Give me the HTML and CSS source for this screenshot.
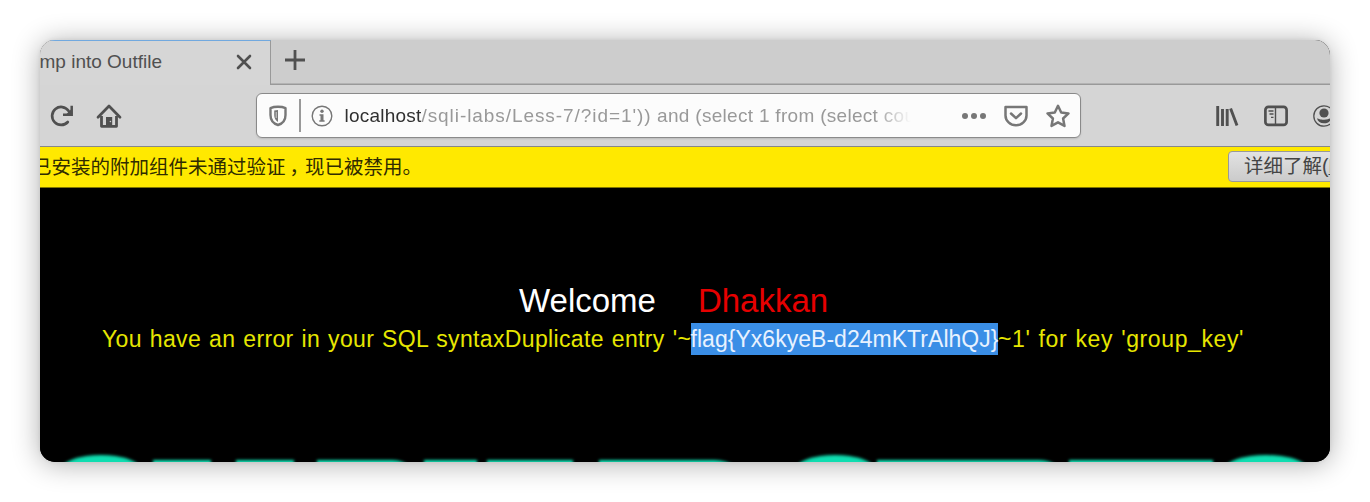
FILE: index.html
```html
<!DOCTYPE html>
<html lang="zh-CN">
<head>
<meta charset="utf-8">
<title>Dump into Outfile</title>
<link rel="stylesheet" href="styles.css">
</head>
<body>
<main class="window">
  <header class="tabs">
    <div class="tab">
      <span class="tab-title">mp into Outfile</span>
      <svg class="close" width="16" height="16" viewBox="0 0 16 16"><path d="M2 2l12 12M14 2L2 14"/></svg>
    </div>
    <svg class="plus" width="22" height="22" viewBox="0 0 22 22"><path d="M11 1v20M1 11h20"/></svg>
  </header>
  <nav class="toolbar">
    <svg class="icon reload" width="24" height="24" viewBox="0 0 24 24"><path d="M17.800 18A9 9 0 1 1 18.500 6.800L21 9.500" fill="none" stroke="#505050" stroke-width="2.700" stroke-linecap="round"/><path d="M21.700 1.800V10.700H13" fill="none" stroke="#505050" stroke-width="2.500"/><path d="M21.500 5v6h-6z" fill="#505050"/></svg>
    <svg class="icon home" width="26" height="26" viewBox="0 0 26 26"><path d="M2 14.200L13 3l11 11.200" fill="none" stroke="#505050" stroke-width="2.700" stroke-linecap="round" stroke-linejoin="round"/><path d="M5.500 13v10.300h15V13" fill="none" stroke="#505050" stroke-width="2.800" stroke-linejoin="round"/><path d="M10 14h6.200v9H10z" fill="#505050"/><circle cx="14.400" cy="18.500" r=".8" fill="#ccc"/></svg>
    <div class="urlbar">
      <svg class="shield" width="20" height="22" viewBox="0 0 20 22"><path d="M10 1.800c3 0 5.500.4 7.500 1.300V10c0 5-3.200 8.700-7.500 10C5.700 18.700 2.500 15 2.500 10V3.100C4.500 2.200 7 1.800 10 1.800z" fill="none" stroke="#777" stroke-width="2.400" stroke-linejoin="round"/><path d="M10 5v12c-2.300-1.300-3.800-3.800-3.800-7V5.500z" fill="#777"/><path d="M8.200 7v6" stroke="#ddd" stroke-width=".9"/></svg>
      <i class="divider"></i>
      <svg class="info" width="22" height="22" viewBox="0 0 22 22"><circle cx="11" cy="11" r="9.800" fill="none" stroke="#777" stroke-width="1.400"/><circle cx="11" cy="6.200" r="1.700" fill="#777"/><path d="M8.500 9.300h4v6h1.100v1.500H8.300v-1.500h1.200v-4.500h-1z" fill="#777"/></svg>
      <div class="url"><b>localhost</b><span class="path">/sqli-labs/Less-7/?id=1'))</span><span class="query"> and (select 1 from (select cou</span></div>
      <svg class="dots" width="26" height="8" viewBox="0 0 26 8"><circle cx="4" cy="4" r="3"/><circle cx="13" cy="4" r="3"/><circle cx="22" cy="4" r="3"/></svg>
      <svg class="pocket" width="26" height="24" viewBox="0 0 26 24"><path d="M2.500 3h21v8.500a10.500 9.700 0 0 1-21 0z"/><path d="M8 9.500l5 4.700 5-4.700" stroke-linecap="round"/></svg>
      <svg class="star" width="26" height="26" viewBox="0 0 26 26"><path d="M13 2.800l3.200 6.700 7.300.9-5.400 5.100 1.400 7.400-6.500-3.600-6.500 3.600 1.400-7.400-5.400-5.100 7.300-.9z"/></svg>
    </div>
    <svg class="icon library" width="24" height="24" viewBox="0 0 24 24"><path d="M2.700 2v20M7.500 5v17M12.200 5v17M15.600 4.500L22 21.600" fill="none" stroke="#505050" stroke-width="2.900"/></svg>
    <svg class="icon sidebar" width="26" height="24" viewBox="0 0 26 24"><rect x="2.400" y="2.900" width="21.200" height="18" rx="3" fill="none" stroke="#505050" stroke-width="2.700"/><path d="M12.500 3v18" stroke="#505050" stroke-width="1.400"/><path d="M5.500 7h5M6.500 10h4M8 13.300h2.500" stroke="#505050" stroke-width="1.300"/></svg>
    <svg class="icon account" width="24" height="24" viewBox="0 0 24 24"><circle cx="12" cy="12" r="10.200" fill="none" stroke="#505050" stroke-width="1.300"/><circle cx="12" cy="9" r="4.600" fill="#505050"/><path d="M5 14.500c2 0 3 1.300 7 1.300s5-1.300 7-1.300c-.8 3-3.300 4.800-7 4.800s-6.200-1.800-7-4.800z" fill="#505050"/></svg>
  </nav>
  <section class="notice">
    <span class="notice-text">已安装的附加组件未通过验证<span class="comma">，</span>现已被禁用。</span>
    <button class="more">详细了解(<u>L</u>)</button>
  </section>
  <section class="page">
    <h1 class="welcome"><span class="white">Welcome</span><span class="name">Dhakkan</span></h1>
    <p class="error"><span class="before">You have an error in your SQL syntaxDuplicate entry '~</span><mark>flag{Yx6kyeB-d24mKTrAlhQJ}</mark><span class="after">~1' for key 'group_key'</span></p>
    <svg class="banner" width="1290" height="14" viewBox="0 0 1290 14">
      <g fill="#0fddb0">
        <ellipse cx="61" cy="19.500" rx="38" ry="12.500"/>
        <rect x="113" y="12" width="58" height="10"/>
        <rect x="196" y="12" width="58" height="10"/>
        <path d="M277 12h75q14 0 20 10h-95z"/>
        <rect x="384" y="12" width="53" height="10"/>
        <rect x="447" y="12" width="86" height="10"/>
        <path d="M559 12h115q15 0 26 10H559z"/>
        <ellipse cx="795" cy="19.500" rx="38" ry="12.500"/>
        <path d="M837 12h162q14 0 22 10H837z"/>
        <rect x="1029" y="12" width="144" height="10"/>
        <ellipse cx="1226" cy="19.500" rx="40" ry="12.500"/>
      </g>
    </svg>
  </section>
</main>
</body>
</html>
```
FILE: styles.css
```css
body { display: flow-root; height: 502px; overflow: hidden; margin: 0; background: #fff; font-family: "Liberation Sans", "Noto Sans CJK SC", sans-serif; }
svg { display: block; flex: none; }
.window { width: 1290px; height: 422px; margin: 40px; border-radius: 15px; overflow: hidden; background: #000; box-shadow: 0 2px 28px rgba(0,0,0,.32), 0 0 4px rgba(0,0,0,.08); }
.tabs { height: 45px; display: flex; background: #cdcdcd; box-shadow: inset 0 -1.5px #999; }
.tab { box-sizing: border-box; width: 231px; height: 45px; background: #d6d6d6; border-top: 1px solid #72a9df; border-right: 1.5px solid #999; display: flex; align-items: center; justify-content: flex-end; padding-right: 18px; padding-bottom: 2px; }
.tab-title { font-size: 19px; color: #505050; white-space: nowrap; margin-right: 74px; }
.close { fill: none; stroke: #505050; stroke-width: 2.6; stroke-linecap: round; }
.plus { fill: none; stroke: #505050; stroke-width: 2.8; margin: 9px 0 0 13px; }
.toolbar { box-sizing: border-box; height: 62px; background: #d5d5d5; border-bottom: 1px solid #888; display: flex; align-items: center; }
.reload { margin-left: 10px; }
.home { margin-left: 22px; }
.urlbar { box-sizing: border-box; flex: none; width: 825px; height: 45px; margin-left: 134px; background: #fcfcfc; border: 1.5px solid #8a8a8a; border-radius: 6px; display: flex; align-items: center; box-shadow: 0 1px 2px rgba(0,0,0,.12); }
.shield { margin-left: 11px; }
.divider { width: 1.5px; height: 33px; background: #999; margin-left: 11px; }
.info { margin-left: 10px; }
.url { flex: none; width: 568px; margin-left: 12px; padding-top: 1px; font-size: 19px; line-height: 28px; color: #999; white-space: nowrap; overflow: hidden; mask-image: linear-gradient(to right, #000 530px, transparent 566px); }
.url b { font-weight: 400; color: #303030; letter-spacing: .22px; }
.path { letter-spacing: .93px; }
.query { letter-spacing: .3px; }
.dots { fill: #777; margin-left: 48px; }
.pocket, .star { fill: none; stroke: #777; stroke-width: 2.5; stroke-linejoin: round; }
.pocket { margin-left: 16px; }
.star { margin-left: 16px; }
.library { margin-left: 134px; }
.sidebar { margin-left: 24px; }
.account { margin-left: 23px; }
.notice { box-sizing: border-box; height: 41px; background: #ffe900; border-bottom: 1px solid #827700; display: flex; align-items: center; justify-content: space-between; }
.notice-text { margin-left: -8px; padding-bottom: 3px; font: 19.5px/28px "Noto Sans CJK SC", sans-serif; color: #302c00; white-space: nowrap; }
.comma { margin-left: 4px; margin-right: -4px; }
.more { box-sizing: border-box; flex: none; width: 130px; height: 31px; margin-right: -28px; margin-bottom: 1px; padding: 0 0 1px 15px; text-align: left; border: 1.5px solid #999; border-radius: 4px; background: linear-gradient(#e2e2e2, #cbcbcb); color: #444; font: 19.5px/26px "Liberation Sans", "Noto Sans CJK SC", sans-serif; white-space: nowrap; }
.page { height: 274px; background: #000; display: flex; flex-direction: column; }
.welcome { margin: 92px 0 0 479px; font-size: 33px; line-height: 42px; font-weight: 400; display: flex; gap: 42px; }
.white { color: #fff; }
.name { color: #e60000; }
.error { margin: 1px 0 0 62px; font-size: 23px; line-height: 32px; color: #e6e600; display: flex; white-space: pre; word-spacing: 1.2px; }
.before { width: 588.5px; letter-spacing: .35px; }
mark { width: 307.5px; background: #3a8ee6; color: #e8f2ff; letter-spacing: .03px; }
.after { letter-spacing: .6px; }
.banner { margin-top: auto; }
.banner g { filter: blur(1.6px); }
```
